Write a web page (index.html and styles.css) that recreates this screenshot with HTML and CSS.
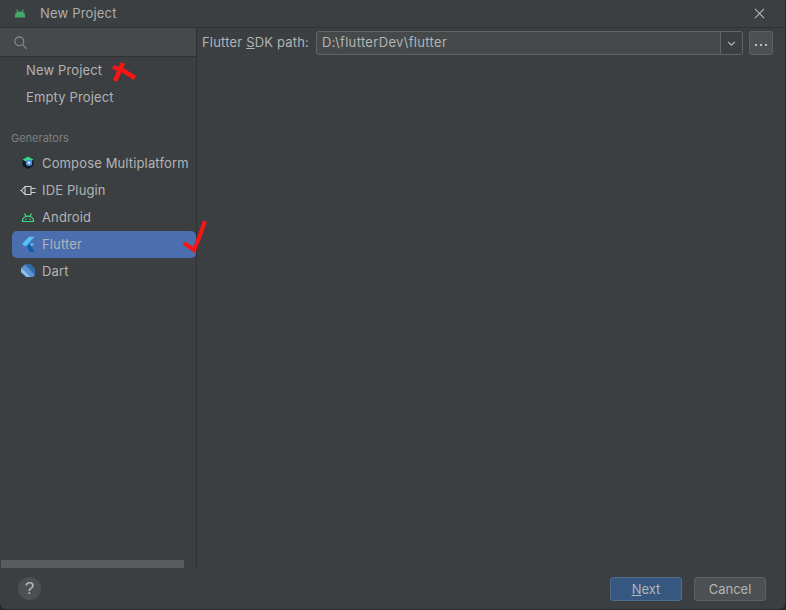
FILE: index.html
```html
<!DOCTYPE html>
<html lang="en">
<head>
<meta charset="utf-8">
<title>New Project</title>
<link rel="stylesheet" href="styles.css">
</head>
<body>
<div class="window">
  <header class="titlebar">
    <svg class="title-icon" viewBox="0 0 14 14"><path d="M2 11.500V9.500C2 7 4 5.500 7 5.500s5 1.500 5 4v2z"/><path class="antenna" d="M3.500 3.500 5 6M10.500 3.500 9 6"/></svg>
    <span class="title-text">New Project</span>
    <svg class="close" viewBox="0 0 12 12"><path d="M1 1l10 10M11 1 1 11"/></svg>
  </header>
  <div class="content">
    <aside class="sidebar">
      <div class="search">
        <svg class="search-icon" viewBox="0 0 14 14"><circle cx="5.700" cy="5.700" r="4.800"/><path d="M9.200 9.200l4.300 4.300"/></svg>
      </div>
      <ul class="list plain">
        <li class="row">New Project</li>
        <li class="row">Empty Project</li>
      </ul>
      <div class="group">Generators</div>
      <ul class="list">
        <li class="row item">
          <svg class="icon" viewBox="0 0 16 16"><path fill="#0d1b26" d="M8 1.500l5.500 3.200v6.100L8 14l-5.500-3.200V4.700z"/><path fill="#3ddc84" d="M8 1.500l5.500 3.200L8 7.500 2.500 4.700z"/><circle cx="9" cy="7.800" r="3.200" fill="#4a8fdf"/><circle cx="9" cy="7.800" r="1.300" fill="#e8f0fa"/></svg>
          <span>Compose Multiplatform</span>
        </li>
        <li class="row item">
          <svg class="icon" viewBox="0 0 16 16"><path class="plug" d="M5 4.500 1.500 8.500 5 12.500M5 4.500h6v8H5zM.2 8.500h1.300M11 6.500h4.500M11 10.500h4.500"/></svg>
          <span>IDE Plugin</span>
        </li>
        <li class="row item">
          <svg class="icon" viewBox="0 0 16 16"><path class="android-line" d="M2.500 12.500V12C2.500 9.200 4.800 7.200 8 7.200s5.500 2 5.500 4.800v.5zM4.500 4.500l1.600 3M11.500 4.500l-1.600 3"/><path class="android-eyes" d="M5.200 9.600h1.200v1.200H5.200zM9.600 9.600h1.200v1.200H9.600z"/></svg>
          <span>Android</span>
        </li>
        <li class="row item selected">
          <svg class="icon" viewBox="0 0 16 16"><path fill="#54c5f8" d="M9 .8h5.500L5.500 10.500 2 8z"/><path fill="#54c5f8" d="M9 7.500h5.500L9.800 12.500 7 10z"/><path fill="#0f5ea8" d="M7 10l2.800-2.500L14.500 16H9.800z"/></svg>
          <span>Flutter</span>
        </li>
        <li class="row item">
          <svg class="icon" viewBox="0 0 16 16"><path fill="#5a93d0" d="M5 1.500h5.500L15 6v6l-2 2H6.500L1 9V5z"/><path fill="#2f6aa8" d="M5 1.500h5.500L15 6v6z"/><path fill="#8ec0ee" d="M3 6.500 10.500 14h-4L1 9V6z"/></svg>
          <span>Dart</span>
        </li>
      </ul>
      <div class="scroll-track"><div class="scroll-thumb"></div></div>
    </aside>
    <main class="main">
      <label class="sdk-label">Flutter <u>S</u>DK path:</label>
      <div class="combo">
        <div class="combo-value">D:\flutterDev\flutter</div>
        <div class="combo-arrow"><svg viewBox="0 0 10 6"><path d="M1 1l4 4 4-4"/></svg></div>
      </div>
      <button class="dots"><i></i><i></i><i></i></button>
    </main>
  </div>
  <footer class="footer">
    <button class="help">?</button>
    <button class="btn primary"><u>N</u>ext</button>
    <button class="btn">Cancel</button>
  </footer>
  <svg class="marks" viewBox="0 0 786 610">
    <path class="mark-x" d="M113 67 124 71 135 78M123 63 119 72 115 81"/>
    <path class="mark-check" d="M184 243 194 250 199 238 205 221"/>
  </svg>
</div>
</body>
</html>
```
FILE: styles.css
```css
* { box-sizing: border-box; }
html, body { margin: 0; height: 100%; background: #26282a; overflow: hidden; }
body { font-family: Inter, "Liberation Sans", sans-serif; font-size: 13px; color: #b2b4b6; }

.window {
  position: relative;
  width: 785px;
  height: 609px;
  background: #3c3f41;
  border-radius: 0 0 6px 6px;
  display: flex;
  flex-direction: column;
  overflow: hidden;
}

.titlebar {
  height: 28px;
  flex: none;
  display: flex;
  align-items: center;
  padding: 0 20px 1px 13px;
  border-bottom: 1px solid #323232;
}
.title-icon { width: 14px; height: 14px; fill: #44a866; }
.antenna { fill: none; stroke: #44a866; stroke-width: 1.100; }
.title-text { margin-left: 13px; color: #acaeb0; letter-spacing: 0.18px; }
.close { width: 11px; height: 11px; margin-left: auto; fill: none; stroke: #b8babc; stroke-width: 1.100; }

.content { flex: 1; min-height: 0; display: flex; }

.sidebar {
  width: 197px;
  flex: none;
  display: flex;
  flex-direction: column;
  border-right: 1px solid #323232;
}
.search {
  height: 29px;
  flex: none;
  background: #45494a;
  border-bottom: 1px solid #323232;
  display: flex;
  align-items: center;
  padding-left: 14px;
}
.search-icon { width: 13px; height: 13px; fill: none; stroke: #8b8e90; stroke-width: 1.200; }

.list { list-style: none; margin: 0; padding: 0; }
.row { height: 27px; padding-bottom: 1px; display: flex; align-items: center; white-space: nowrap; letter-spacing: 0.14px; }
.plain .row { padding-left: 26px; }
.group { height: 39px; flex: none; padding: 20px 0 0 11px; font-size: 11px; line-height: 14px; color: #7c8083; }
.item { margin-left: 12px; padding-left: 8px; gap: 6px; border-radius: 5px 0 0 5px; }
.selected { background: #4b6eaf; border-radius: 5px; }
.icon { width: 16px; height: 16px; flex: none; }
.plug { fill: none; stroke: #d0d2d4; stroke-width: 1.100; }
.android-line { fill: none; stroke: #3ddc84; stroke-width: 1.200; }
.android-eyes { fill: #3ddc84; }

.scroll-track { margin-top: auto; height: 9px; padding-left: 1px; flex: none; }
.scroll-thumb { width: 183px; height: 8px; background: #5a5c5e; }

.main {
  flex: 1;
  display: flex;
  align-items: flex-start;
  padding: 3px 12px 0 5px;
}
.sdk-label { height: 24px; line-height: 23px; width: 114px; flex: none; white-space: nowrap; letter-spacing: 0.18px; }
.combo {
  flex: 1;
  height: 24px;
  display: flex;
  border: 1px solid #646464;
  border-radius: 3px;
  background: #45494a;
  overflow: hidden;
}
.combo-value { flex: 1; padding-left: 5px; line-height: 21px; letter-spacing: 0.33px; }
.combo-arrow {
  width: 22px;
  flex: none;
  border-left: 1px solid #646464;
  background: #3c3f41;
  display: flex;
  align-items: center;
  justify-content: center;
}
.combo-arrow svg { width: 9px; height: 5px; fill: none; stroke: #b9bbbd; stroke-width: 1.300; }
.dots {
  width: 24px;
  height: 24px;
  flex: none;
  margin-left: 6px;
  padding: 3px 0 0;
  background: #4c5052;
  border: 1px solid #5e6060;
  border-radius: 3px;
  display: flex;
  gap: 3px;
  align-items: center;
  justify-content: center;
}
.dots i { width: 2px; height: 2px; background: #b4c2c6; }

.footer {
  height: 40px;
  flex: none;
  display: flex;
  align-items: flex-start;
  padding: 8px 19px 0 18px;
}
.help {
  width: 23px;
  height: 23px;
  padding: 0;
  border: none;
  border-radius: 50%;
  background: #4c5052;
  color: #bbbbbb;
  font: 17px/23px "Liberation Sans", sans-serif;
}
.btn {
  width: 72px;
  height: 24px;
  padding: 0;
  margin-left: 12px;
  background: #4c5052;
  border: 1px solid #5e6060;
  border-radius: 3px;
  color: #b2b4b6;
  font: 13px Inter, "Liberation Sans", sans-serif;
}
.primary { margin-left: auto; background: #365880; border-color: #4c708c; }

.marks {
  position: absolute;
  left: 0;
  top: 0;
  width: 786px;
  height: 610px;
  pointer-events: none;
  fill: none;
  stroke: #fb1414;
}
.mark-x { stroke-width: 4.500; }
.mark-check { stroke-width: 4; }
```
